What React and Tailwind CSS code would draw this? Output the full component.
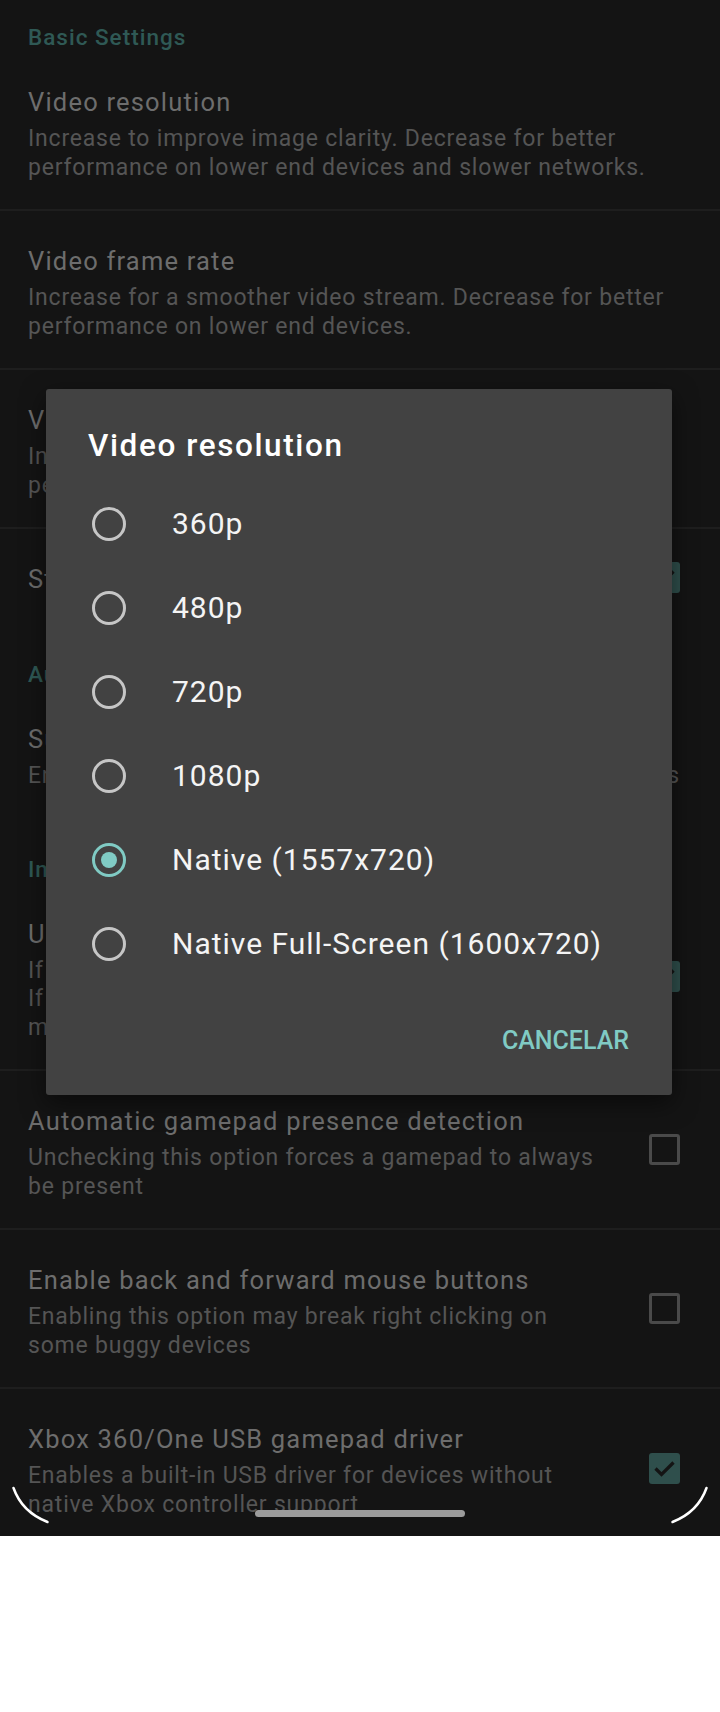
import React from "react";

const FONT = "[font-family:Roboto,'Noto_Sans',sans-serif]";

function Checkbox({ checked }) {
  if (checked) {
    return (
      <div className="w-[31px] h-[31px] rounded-[3px] bg-[#2f4f4c] flex items-center justify-center shrink-0">
        <svg width="31" height="31" viewBox="0 0 31 31">
          <path d="M6.5 15.5 L12.5 21.5 L24.5 9.5" fill="none" stroke="#141414" strokeWidth="3.2" />
        </svg>
      </div>
    );
  }
  return <div className="w-[31px] h-[31px] rounded-[3px] border-[3px] border-[#4a4a4a] shrink-0" />;
}

function Category({ children, pt = "pt-[34px]" }) {
  return (
    <div
      className={`pl-[28px] ${pt} pb-[1px] text-[22.5px] leading-[28px] tracking-[1px] font-medium text-[#2f5955] whitespace-nowrap`}
    >
      {children}
    </div>
  );
}

function Row({ title, lines, check, divider }) {
  const hasCheck = check !== undefined;
  return (
    <div
      className={`flex items-center pl-[28px] ${hasCheck ? "pr-[40px]" : "pr-[28px]"} ${
        divider ? "border-b-2 border-[#1e1e1e]" : ""
      }`}
    >
      <div
        className={`flex-1 min-w-0 pt-[33px] ${
          lines ? (divider ? "pb-[27px]" : "pb-[29px]") : divider ? "pb-[28px]" : "pb-[30px]"
        } ${hasCheck ? "mr-[46px]" : ""}`}
      >
        <div className="text-[25.5px] leading-[34px] tracking-[1.2px] text-[#6d6d6d] whitespace-nowrap">{title}</div>
        {lines && (
          <div className="mt-[6px] text-[23px] leading-[28.5px] tracking-[0.8px] text-[#555555]">
            {lines.map((l) => (
              <div key={l} className="whitespace-nowrap">
                {l}
              </div>
            ))}
          </div>
        )}
      </div>
      {hasCheck && <Checkbox checked={check} />}
    </div>
  );
}

function Radio({ checked }) {
  return (
    <svg width="34" height="34" viewBox="0 0 34 34" className="shrink-0">
      <circle cx="17" cy="17" r="15.5" fill="none" stroke={checked ? "#80cbc4" : "#c6c6c6"} strokeWidth="3" />
      {checked && <circle cx="17" cy="17" r="8" fill="#80cbc4" />}
    </svg>
  );
}

const options = [
  "360p",
  "480p",
  "720p",
  "1080p",
  "Native (1557x720)",
  "Native Full-Screen (1600x720)",
];

export default function App() {
  return (
    <div className={`w-[720px] h-[1712px] bg-white ${FONT}`}>
      <div className="relative h-[1536px] overflow-hidden bg-[#141414]">
        <div className="-mt-[11px]">
          <Category>Basic Settings</Category>
          <Row
            title="Video resolution"
            lines={[
              "Increase to improve image clarity. Decrease for better",
              "performance on lower end devices and slower networks.",
            ]}
            divider
          />
          <Row
            title="Video frame rate"
            lines={[
              "Increase for a smoother video stream. Decrease for better",
              "performance on lower end devices.",
            ]}
            divider
          />
          <Row
            title="Video bitrate"
            lines={[
              "Increase for better image quality. Decrease to improve",
              "performance on slower connections.",
            ]}
            divider
          />
          <Row title="Stretch video to full-screen" check={true} />
          <Category>Audio Settings</Category>
          <Row
            title="Surround sound config"
            lines={["Enable 5.1 or 7.1 surround sound for home-theater systems"]}
          />
          <Category pt="pt-[35px]">Input Settings</Category>
          <Row
            title="Use touchscreen as a trackpad"
            lines={[
              "If enabled, the touchscreen acts like a trackpad.",
              "If disabled, the touchscreen directly controls the",
              "mouse cursor.",
            ]}
            check={true}
            divider
          />
          <Row
            title="Automatic gamepad presence detection"
            lines={["Unchecking this option forces a gamepad to always", "be present"]}
            check={false}
            divider
          />
          <Row
            title="Enable back and forward mouse buttons"
            lines={["Enabling this option may break right clicking on", "some buggy devices"]}
            check={false}
            divider
          />
          <Row
            title="Xbox 360/One USB gamepad driver"
            lines={["Enables a built-in USB driver for devices without", "native Xbox controller support"]}
            check={true}
          />
        </div>

        {/* Dialog */}
        <div className="absolute left-[46px] top-[389px] w-[626px] h-[706px] bg-[#424242] rounded-[3px] shadow-[0_8px_24px_rgba(0,0,0,0.5)] flex flex-col">
          <div className="pt-[37px] pl-[42px] text-[31.5px] leading-[40px] tracking-[1.6px] font-medium text-white whitespace-nowrap">
            Video resolution
          </div>
          <div className="mt-[16px] flex flex-col">
            {options.map((o, i) => (
              <div key={o} className="h-[84px] flex items-center pl-[46px]">
                <Radio checked={i === 4} />
                <span className="ml-[46px] text-[30px] leading-[36px] tracking-[1px] text-[#f4f4f4] whitespace-nowrap">
                  {o}
                </span>
              </div>
            ))}
          </div>
          <div className="mt-[37px] flex justify-end pr-[43px]">
            <span className="text-[25px] leading-[36px] font-medium text-[#80cbc4]">CANCELAR</span>
          </div>
        </div>

        {/* gesture handle */}
        <div className="absolute left-[255px] top-[1510px] w-[210px] h-[7px] rounded-full bg-[#9c9c9c]" />
        {/* screen corner arcs */}
        <svg className="absolute left-0 top-[1480px]" width="720" height="56" viewBox="0 1480 720 56">
          <path d="M13.5 1488 Q22 1512 47.5 1522" fill="none" stroke="#ffffff" strokeWidth="2.5" strokeLinecap="round" />
          <path d="M706.5 1488 Q698 1512 672.5 1522" fill="none" stroke="#ffffff" strokeWidth="2.5" strokeLinecap="round" />
        </svg>
      </div>
    </div>
  );
}
